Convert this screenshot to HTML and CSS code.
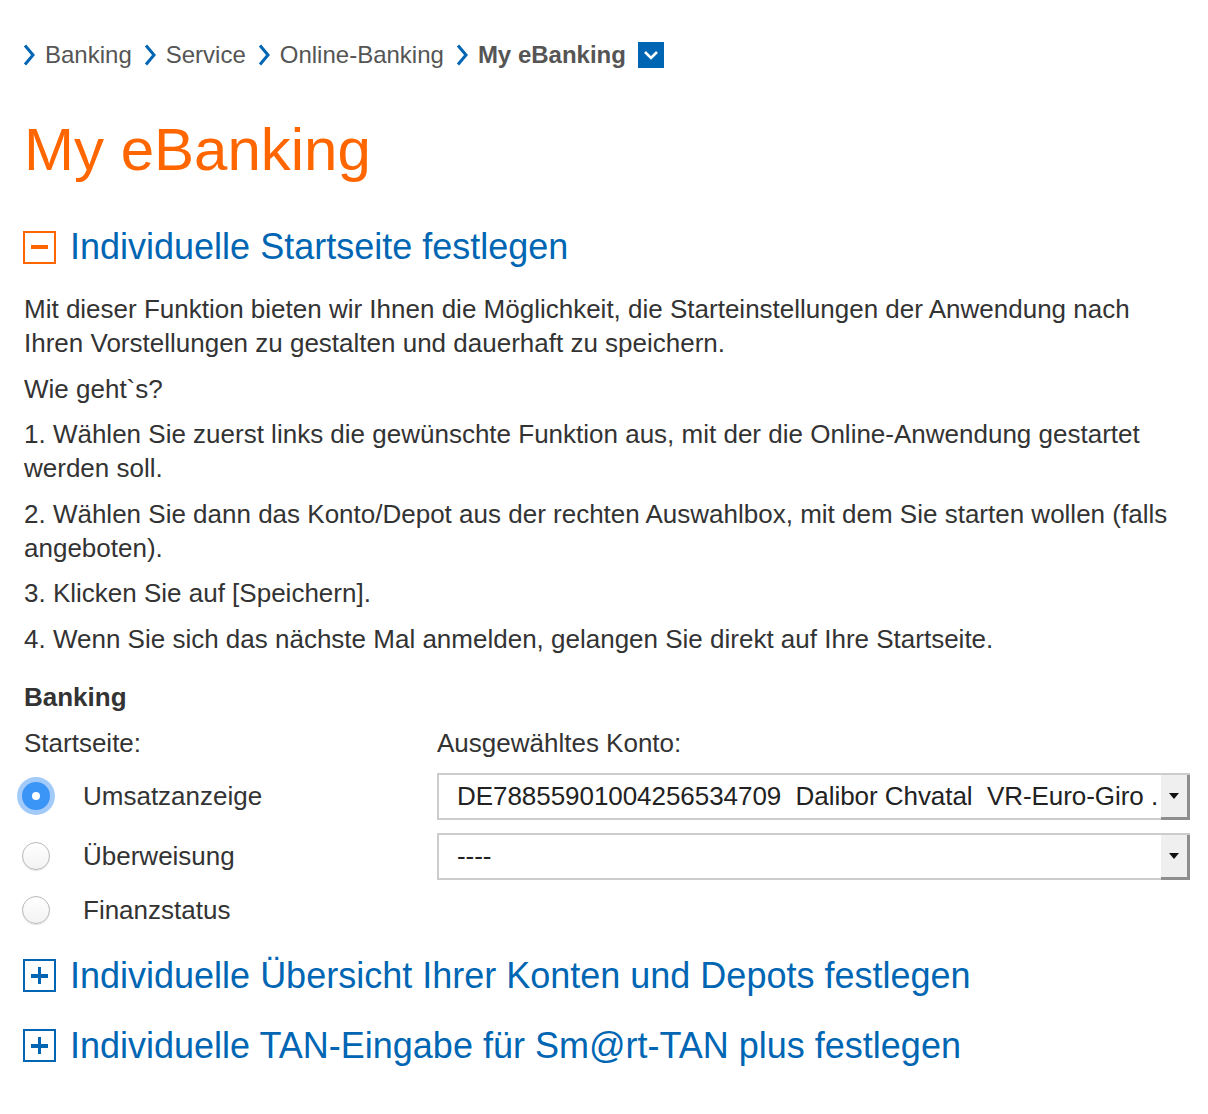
FILE: index.html
```html
<!DOCTYPE html>
<html lang="de">
<head>
<meta charset="utf-8">
<title>My eBanking</title>
<link rel="stylesheet" href="styles.css">
</head>
<body>
<div class="page">
  <nav class="crumbs">
    <a class="crumb" href="#"><svg class="chev" viewBox="0 0 12 22"><path d="M2 1.5 L10 11 L2 20.5"/></svg>Banking</a>
    <a class="crumb" href="#"><svg class="chev" viewBox="0 0 12 22"><path d="M2 1.5 L10 11 L2 20.5"/></svg>Service</a>
    <a class="crumb" href="#"><svg class="chev" viewBox="0 0 12 22"><path d="M2 1.5 L10 11 L2 20.5"/></svg>Online-Banking</a>
    <span class="crumb current"><svg class="chev" viewBox="0 0 12 22"><path d="M2 1.5 L10 11 L2 20.5"/></svg>My eBanking</span>
    <span class="crumb-menu"><svg viewBox="0 0 26 26"><path d="M7 10 L13 16 L19 10"/></svg></span>
  </nav>

  <h1 class="title">My eBanking</h1>

  <h2 class="section open"><span class="toggle minus"><span class="bar"></span></span>Individuelle Startseite festlegen</h2>

  <div class="text">
    <p>Mit dieser Funktion bieten wir Ihnen die Möglichkeit, die Starteinstellungen der Anwendung nach Ihren Vorstellungen zu gestalten und dauerhaft zu speichern.</p>
    <p>Wie geht`s?</p>
    <p>1. Wählen Sie zuerst links die gewünschte Funktion aus, mit der die Online-Anwendung gestartet werden soll.</p>
    <p>2. Wählen Sie dann das Konto/Depot aus der rechten Auswahlbox, mit dem Sie starten wollen (falls angeboten).</p>
    <p>3. Klicken Sie auf [Speichern].</p>
    <p>4. Wenn Sie sich das nächste Mal anmelden, gelangen Sie direkt auf Ihre Startseite.</p>
  </div>

  <h3 class="group">Banking</h3>

  <div class="form">
    <div class="label">Startseite:</div>
    <div class="label">Ausgewähltes Konto:</div>

    <div class="opt"><span class="radio checked"></span><span>Umsatzanzeige</span></div>
    <div class="select"><span class="sel-text">DE78855901004256534709  Dalibor Chvatal  VR-Euro-Giro .</span><span class="sel-btn"><svg viewBox="0 0 10 6"><path d="M0 0 H10 L5 6 Z"/></svg></span></div>

    <div class="opt"><span class="radio"></span><span>Überweisung</span></div>
    <div class="select"><span class="sel-text">----</span><span class="sel-btn"><svg viewBox="0 0 10 6"><path d="M0 0 H10 L5 6 Z"/></svg></span></div>

    <div class="opt"><span class="radio"></span><span>Finanzstatus</span></div>
    <div></div>
  </div>

  <h2 class="section closed first"><span class="toggle plus"><span class="bar"></span><span class="bar v"></span></span>Individuelle Übersicht Ihrer Konten und Depots festlegen</h2>
  <h2 class="section closed"><span class="toggle plus"><span class="bar"></span><span class="bar v"></span></span>Individuelle TAN-Eingabe für Sm@rt-TAN plus festlegen</h2>
</div>
</body>
</html>
```
FILE: styles.css
```css
html, body {
  margin: 0;
  padding: 0;
  background: #fff;
}
body {
  font-family: "Liberation Sans", Arial, Helvetica, sans-serif;
  color: #333;
  font-size: 26px;
}
.page {
  padding: 40px 18px 40px 24px;
}

/* breadcrumb */
.crumbs {
  display: flex;
  align-items: center;
  height: 30px;
  line-height: 30px;
  font-size: 24px;
  color: #555;
}
.crumb {
  display: inline-flex;
  align-items: center;
  color: #555;
  text-decoration: none;
  margin-right: 13px;
}
.crumb.current {
  font-weight: bold;
  margin-right: 12px;
}
.chev {
  width: 12px;
  height: 22px;
  margin-right: 10px;
  margin-left: -1px;
  fill: none;
  stroke: #0066b3;
  stroke-width: 3;
}
.crumb-menu {
  display: inline-block;
  width: 26px;
  height: 26px;
  background: #0066b3;
}
.crumb-menu svg {
  width: 26px;
  height: 26px;
  display: block;
  fill: none;
  stroke: #fff;
  stroke-width: 2.6;
}

/* title */
.title {
  margin: 45px 0 0 0;
  font-size: 60px;
  line-height: 70px;
  font-weight: normal;
  color: #ff6600;
}

/* section headings */
.section {
  display: flex;
  align-items: center;
  margin: 40px 0 0 -1px;
  font-size: 36px;
  line-height: 44px;
  font-weight: normal;
  color: #0066b3;
}
.toggle {
  position: relative;
  box-sizing: border-box;
  width: 33px;
  height: 33px;
  border: 2px solid #0066b3;
  margin-right: 14px;
  flex: none;
}
.toggle.minus {
  border-color: #ff6600;
}
.toggle .bar {
  position: absolute;
  left: 6px;
  top: 13px;
  width: 17px;
  height: 3.5px;
  background: #0066b3;
}
.toggle.minus .bar {
  background: #ff6600;
  height: 4px;
  top: 12.5px;
}
.toggle .bar.v {
  left: 12.75px;
  top: 6px;
  width: 3.5px;
  height: 17px;
}
.section.closed.first {
  margin-top: 27px;
}
.section.closed {
  margin-top: 26px;
}

/* text */
.text {
  margin-top: 23px;
}
.text p {
  margin: 0 0 11.5px 0;
  line-height: 34px;
}
.text p:last-child {
  margin-bottom: 0;
}
.group {
  margin: 24px 0 0 0;
  font-size: 26px;
  line-height: 34px;
  font-weight: bold;
}

/* form */
.form {
  display: grid;
  grid-template-columns: 413px 753px;
  grid-template-rows: 34px 47px 47px 34px;
  row-gap: 13px;
  margin-top: 12px;
}
.form .label {
  line-height: 34px;
}
.opt {
  display: flex;
  align-items: center;
  line-height: 34px;
}
.radio {
  box-sizing: border-box;
  width: 28px;
  height: 28px;
  border-radius: 50%;
  border: 1px solid #b9b9b9;
  background: linear-gradient(#fff, #f3f3f3);
  box-shadow: 0 1px 1px rgba(0, 0, 0, 0.12);
  margin-left: -2px;
  margin-right: 33px;
  flex: none;
  position: relative;
}
.radio.checked {
  border: none;
  background: #3a95f7;
  box-shadow: 0 0 0 5px #a3cbf9;
}
.radio.checked::after {
  content: "";
  position: absolute;
  left: 10px;
  top: 10px;
  width: 8px;
  height: 8px;
  border-radius: 50%;
  background: #fff;
}
.select {
  box-sizing: border-box;
  display: flex;
  align-items: stretch;
  height: 47px;
  border: 2px solid #cccccc;
  background: #fff;
  color: #222;
}
.sel-text {
  flex: 1;
  overflow: hidden;
  white-space: pre;
  line-height: 43px;
  padding-left: 18px;
  letter-spacing: -0.05px;
}
.sel-btn {
  flex: none;
  width: 29px;
  box-sizing: border-box;
  background: #efefef;
  border-right: 3px solid #8e8e8e;
  border-bottom: 3px solid #8e8e8e;
  display: flex;
  align-items: center;
  justify-content: center;
  margin-right: -2px;
  margin-bottom: -2px;
}
.sel-btn svg {
  width: 10px;
  height: 6px;
  fill: #111;
}
```
